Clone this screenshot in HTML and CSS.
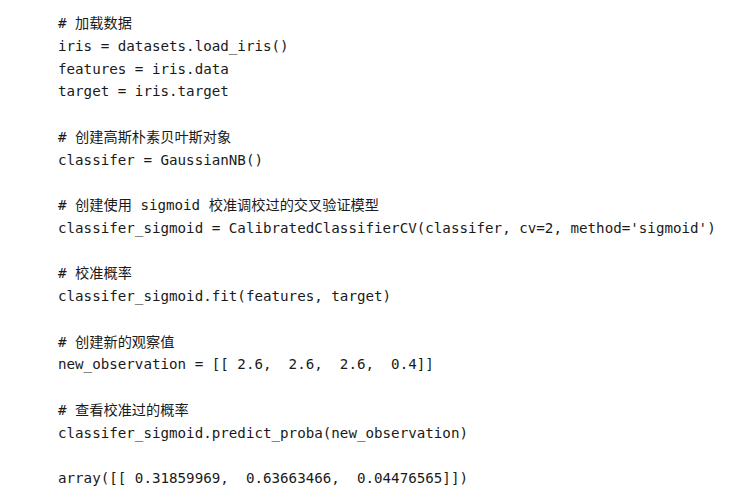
FILE: index.html
```html
<!DOCTYPE html>
<html lang="zh">
<head>
<meta charset="utf-8">
<link rel="stylesheet" href="styles.css">
</head>
<body>
<pre class="code"># 加载数据
iris = datasets.load_iris()
features = iris.data
target = iris.target

# 创建高斯朴素贝叶斯对象
classifer = GaussianNB()

# 创建使用 sigmoid 校准调校过的交叉验证模型
classifer_sigmoid = CalibratedClassifierCV(classifer, cv=2, method='sigmoid')

# 校准概率
classifer_sigmoid.fit(features, target)

# 创建新的观察值
new_observation = [[ 2.6,  2.6,  2.6,  0.4]]

# 查看校准过的概率
classifer_sigmoid.predict_proba(new_observation)

array([[ 0.31859969,  0.63663466,  0.04476565]])</pre>
</body>
</html>
```
FILE: styles.css
```css
html, body {
  margin: 0;
  padding: 0;
  background: #ffffff;
}
body {
  width: 730px;
  height: 490px;
  overflow: hidden;
}
.code {
  margin: 0;
  padding: 12px 0 0 58px;
  font-family: "DejaVu Sans Mono", "Noto Sans CJK SC", monospace;
  font-size: 14.2px;
  line-height: 22.75px;
  color: #1a1a1a;
}
```
